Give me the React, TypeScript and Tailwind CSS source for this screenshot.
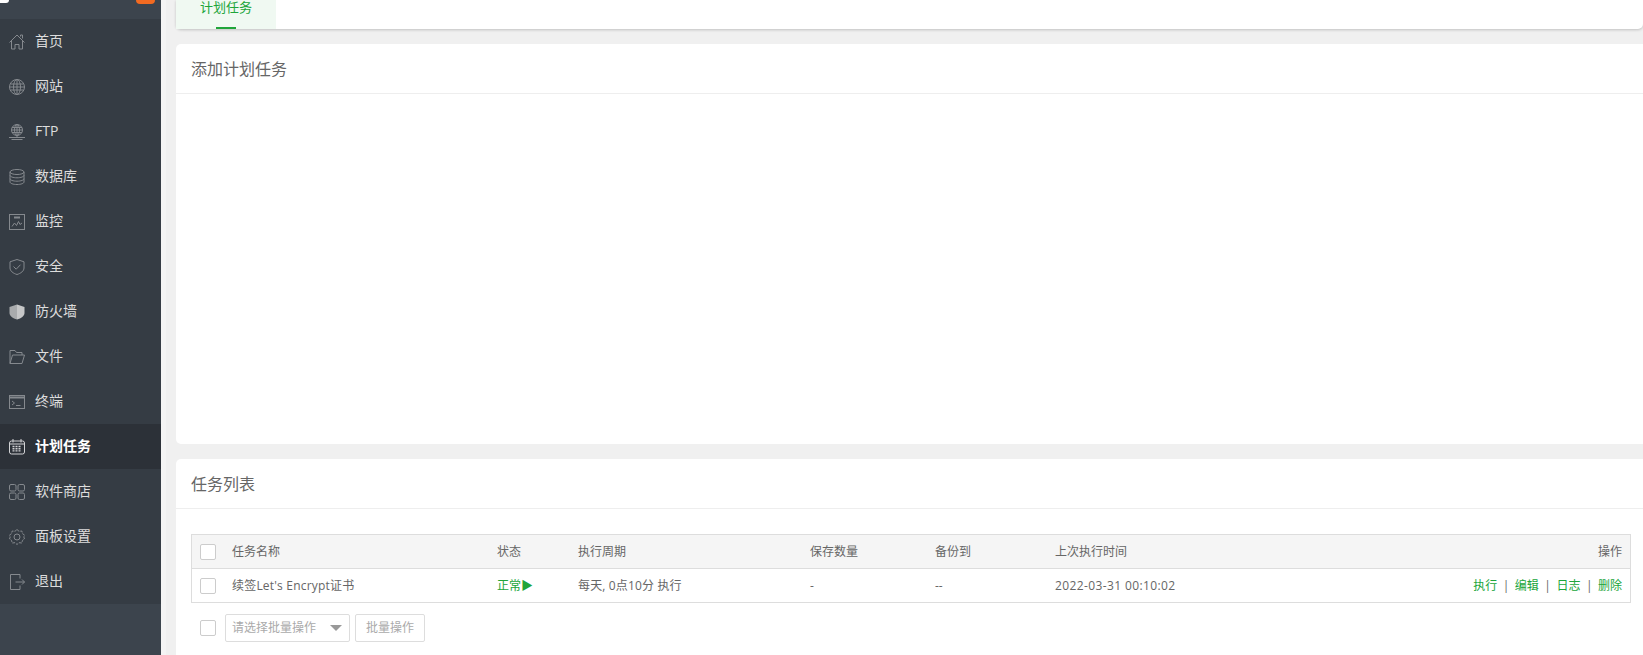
import type { ReactNode } from "react"

const font = "font-['Open_Sans','Noto_Sans_CJK_SC',sans-serif]"

const IconBox = ({ children }: { children: ReactNode }) => (
  <svg
    viewBox="0 0 16 16"
    className="w-4 h-4 shrink-0 text-[#85898e]"
    fill="none"
    stroke="currentColor"
    strokeWidth="1"
  >
    {children}
  </svg>
)

const HomeIcon = () => (
  <IconBox>
    <path d="M.5 8.500 8 1l7.500 7.500M2.500 7v8H6v-4.500h4V15h3.500V7M11.500 2.500V1h2v3.500" />
  </IconBox>
)

const GlobeIcon = () => (
  <IconBox>
    <circle cx="8" cy="8" r="7.500" />
    <ellipse cx="8" cy="8" rx="3.500" ry="7.500" />
    <path d="M8 .5v15M1.500 5h13M.5 8h15M1.500 11h13" />
  </IconBox>
)

const FtpIcon = () => (
  <IconBox>
    <circle cx="8" cy="6" r="5.500" />
    <ellipse cx="8" cy="6" rx="2.500" ry="5.500" />
    <path d="M8 .5v11M3 3.500h10M2.500 6h11M3 8.500h10M8 11.500v2M0 13.500h16M2.500 15.500h11" />
  </IconBox>
)

const DatabaseIcon = () => (
  <IconBox>
    <ellipse cx="8" cy="3" rx="7" ry="2.500" />
    <path d="M1 3v10c0 1.400 3.100 2.500 7 2.500s7-1.100 7-2.500V3M1 6.300c0 1.400 3.100 2.500 7 2.500s7-1.100 7-2.500M1 9.700c0 1.400 3.100 2.500 7 2.500s7-1.100 7-2.500" />
  </IconBox>
)

const MonitorIcon = () => (
  <IconBox>
    <rect x=".5" y=".5" width="15" height="15" />
    <path d="M3 12.500 5.500 9l2 2.500 2-4 1.500 3 2-1.500" />
    <path d="M5 3.500h6" strokeWidth="2" />
  </IconBox>
)

const ShieldIcon = () => (
  <IconBox>
    <path d="M8 .5 15 2.800V9c0 3-3.200 5.400-7 6.500C4.200 14.400 1 12 1 9V2.800Z" />
    <path d="m4.500 7.500 2.700 2.700 4.300-4.500" />
  </IconBox>
)

const FirewallIcon = () => (
  <svg viewBox="0 0 16 16" className="w-4 h-4 shrink-0">
    <path d="M8 .5 15.500 3v6c0 3-3.300 5.300-7.500 6.500Z" fill="#c6c7c8" />
    <path d="M8 .5.500 3v6c0 3 3.300 5.300 7.500 6.500Z" fill="#a9abad" />
  </svg>
)

const FolderIcon = () => (
  <IconBox>
    <path d="M1 14.500V1.500h5l1.500 2H13V6M1 14.500h12L15.500 6H3.500Z" />
  </IconBox>
)

const TerminalIcon = () => (
  <IconBox>
    <rect x=".5" y="1.500" width="15" height="13" />
    <path d="M.5 3.500h15" strokeWidth="2" />
    <path d="m3 7 2.500 2L3 11M7 11.500h4.500" />
  </IconBox>
)

const CalendarIcon = () => (
  <svg viewBox="0 0 16 16" className="w-4 h-4 shrink-0 text-[#d2d3d5]" fill="none" stroke="currentColor">
    <rect x=".5" y="2" width="15" height="13" rx="2" />
    <path d="M4 0v3.500M12 0v3.500M.5 5h15" />
    <path d="M3.500 7.500h9M3.500 9.700h9M3.500 11.900h9" strokeWidth="1.400" strokeDasharray="2 1" />
  </svg>
)

const StoreIcon = () => (
  <IconBox>
    <rect x=".5" y=".5" width="6.500" height="6.500" rx="1.500" />
    <rect x="9" y=".5" width="6.500" height="6.500" rx="1.500" />
    <rect x=".5" y="9" width="6.500" height="6.500" rx="1.500" />
    <rect x="9" y="9" width="6.500" height="6.500" rx="1.500" />
  </IconBox>
)

const SettingsIcon = () => (
  <IconBox>
    <path
      d="M8 .5 10 2.300 12.800 2 13.500 4.700 15.500 6 14.800 8 15.500 10 13.500 11.300 12.800 14 10 13.700 8 15.500 6 13.700 3.200 14 2.500 11.300.5 10 1.200 8 .5 6 2.500 4.700 3.200 2 6 2.300Z"
      strokeDasharray="3 1"
    />
    <circle cx="8" cy="8" r="3" />
  </IconBox>
)

const LogoutIcon = () => (
  <IconBox>
    <path d="M11 4.500v-4H1.500v15H11v-4M6.500 8h9M13 5.500 15.500 8 13 10.500" />
  </IconBox>
)

const menu = [
  { name: "首页", icon: <HomeIcon /> },
  { name: "网站", icon: <GlobeIcon /> },
  { name: "FTP", icon: <FtpIcon /> },
  { name: "数据库", icon: <DatabaseIcon /> },
  { name: "监控", icon: <MonitorIcon /> },
  { name: "安全", icon: <ShieldIcon /> },
  { name: "防火墙", icon: <FirewallIcon /> },
  { name: "文件", icon: <FolderIcon /> },
  { name: "终端", icon: <TerminalIcon /> },
  { name: "计划任务", icon: <CalendarIcon />, active: true },
  { name: "软件商店", icon: <StoreIcon /> },
  { name: "面板设置", icon: <SettingsIcon /> },
  { name: "退出", icon: <LogoutIcon /> },
]

const Checkbox = () => (
  <span className="block w-4 h-4 rounded-[2px] border border-[#cccccc] bg-white" />
)

const CardTitle = ({ children }: { children: ReactNode }) => (
  <div className="h-[50px] flex items-center pl-[15px] border-b border-[#eeeeee] text-base text-[#666666]">
    {children}
  </div>
)

const Sidebar = () => (
  <div className="w-[161px] shrink-0 h-full bg-[#3c444d] flex flex-col">
    <div className="h-[19px] shrink-0 flex justify-between items-start overflow-hidden">
      <span className="block w-[9px] h-[3px] bg-white rounded-br-full" />
      <span className="block w-[19px] h-[4px] mr-[6px] bg-[#f26a21] rounded-b-[4px]" />
    </div>
    {menu.map((item) => (
      <div
        key={item.name}
        className={`h-[45px] shrink-0 flex items-center gap-[10px] pl-[9px] text-sm ${
          item.active ? "bg-[#2c3138] text-white font-bold" : "bg-[#353c44] text-[#dddddd]"
        }`}
      >
        {item.icon}
        <span className="pb-[2px]">{item.name}</span>
      </div>
    ))}
  </div>
)

const actions = ["执行", "编辑", "日志", "删除"]

const TaskTable = () => (
  <div className="mr-3 border border-[#dddddd] text-xs text-[#666666]">
    <div className="h-[34px] flex items-center bg-[#f5f5f5] border-b border-[#dddddd]">
      <span className="w-[40px] pl-[8px] shrink-0"><Checkbox /></span>
      <span className="w-[265px] shrink-0">任务名称</span>
      <span className="w-[81px] shrink-0">状态</span>
      <span className="w-[232px] shrink-0">执行周期</span>
      <span className="w-[125px] shrink-0">保存数量</span>
      <span className="w-[120px] shrink-0">备份到</span>
      <span className="flex-1">上次执行时间</span>
      <span className="pr-2">操作</span>
    </div>
    <div className="h-[33px] flex items-center">
      <span className="w-[40px] pl-[8px] shrink-0"><Checkbox /></span>
      <span className="w-[265px] shrink-0 tracking-[0.2px]">续签Let's Encrypt证书</span>
      <span className="w-[81px] shrink-0 text-[#20a53a]">正常▶</span>
      <span className="w-[232px] shrink-0 tracking-[0.15px]">每天, 0点10分 执行</span>
      <span className="w-[125px] shrink-0">-</span>
      <span className="w-[120px] shrink-0">--</span>
      <span className="flex-1 tracking-[0.38px]">2022-03-31 00:10:02</span>
      <span className="pr-2 flex items-center text-[#20a53a]">
        {actions.map((a, i) => (
          <span key={a}>
            {i > 0 && <span className="mx-[5.5px] text-[#666666]">|</span>}
            {a}
          </span>
        ))}
      </span>
    </div>
  </div>
)

const BatchBar = () => (
  <div className="mt-[11px] flex items-center text-xs">
    <span className="ml-[9px]"><Checkbox /></span>
    <div className="ml-[9px] w-[125px] h-[28px] flex items-center justify-between pl-[6px] pr-[7px] border border-[#dddddd] rounded-[2px] text-[#aaaaaa]">
      请选择批量操作
      <span className="w-0 h-0 border-x-[6px] border-x-transparent border-t-[6px] border-t-[#999999]" />
    </div>
    <div className="ml-[5px] w-[70px] h-[28px] flex items-center justify-center border border-[#dddddd] rounded-[2px] text-[#aaaaaa]">
      批量操作
    </div>
  </div>
)

export default function App() {
  return (
    <div className={`h-screen flex overflow-hidden bg-[#f0f0f0] ${font}`}>
      <Sidebar />
      <div className="flex-1 min-w-0 border-l-[5px] border-[#f4f4f4] pl-[10px] flex flex-col gap-[15px]">
        <div className="h-[29px] shrink-0 bg-white rounded-b-[5px] shadow-[0_1px_3px_rgba(0,0,0,0.2)]">
          <div className="relative w-[100px] h-full bg-[#f0f9f2] text-[13px] text-[#20a53a] text-center leading-[15px]">
            计划任务
            <span className="absolute left-[40px] bottom-0 w-[20px] h-[2px] bg-[#20a53a]" />
          </div>
        </div>
        <div className="h-[400px] shrink-0 bg-white rounded-l-[5px]">
          <CardTitle>添加计划任务</CardTitle>
        </div>
        <div className="flex-1 bg-white rounded-tl-[5px]">
          <CardTitle>任务列表</CardTitle>
          <div className="pt-[25px] pl-[15px]">
            <TaskTable />
            <BatchBar />
          </div>
        </div>
      </div>
    </div>
  )
}
